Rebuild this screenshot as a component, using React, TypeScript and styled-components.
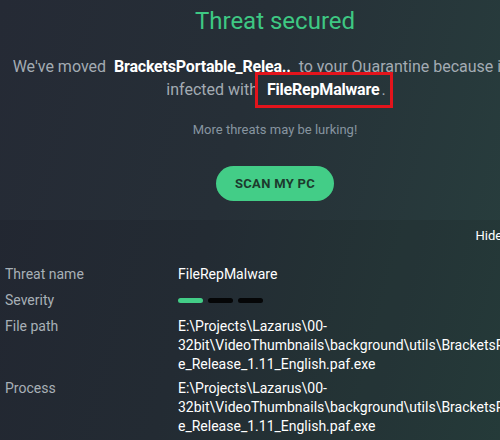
import styled, { createGlobalStyle } from "styled-components";

const GlobalStyle = createGlobalStyle`
  html, body {
    margin: 0;
    padding: 0;
    background: #242a33;
    overflow: hidden;
  }
  body {
    font-family: Roboto, "Liberation Sans", sans-serif;
  }
`;

const Frame = styled.div`
  width: 560px;
  height: 440px;
  display: flex;
  flex-direction: column;
  background: linear-gradient(105deg, #252a35 0%, #262f37 40%, #28423f 100%);
  overflow: hidden;
`;

const Hero = styled.section`
  height: 220px;
  display: flex;
  flex-direction: column;
  align-items: center;
  padding-top: 6px;
  box-sizing: border-box;
  width: 550px;
`;

const Title = styled.h1`
  margin: 0;
  font-size: 24px;
  line-height: 30px;
  font-weight: 400;
  color: #3ec883;
`;

const Message = styled.p`
  margin: 19px 0 0;
  padding-left: 2px;
  font-size: 16px;
  line-height: 23px;
  color: #a3abb3;
  text-align: center;
  white-space: nowrap;
`;

const Strong = styled.b`
  color: #ffffff;
  font-weight: 700;
  letter-spacing: -0.2px;
  margin: 0 4px;
`;

const Marked = styled(Strong)`
  position: relative;
  margin-left: 5px;
  margin-right: 2px;

  &::after {
    content: "";
    position: absolute;
    left: -12px;
    right: -14px;
    top: -8px;
    bottom: -9px;
    border: 3px solid #e3141c;
  }
`;

const Hint = styled.p`
  margin: 20px 0 0;
  font-size: 13px;
  line-height: 18px;
  color: #8795a0;
`;

const ScanButton = styled.button`
  margin-top: 27px;
  width: 118px;
  height: 35px;
  border: 0;
  border-radius: 18px;
  background: #43cd87;
  color: #1c3a2d;
  font-family: inherit;
  font-size: 13px;
  font-weight: 700;
  letter-spacing: 0.3px;
  cursor: pointer;
`;

const Details = styled.section`
  flex: 1;
  background: rgba(0, 0, 0, 0.07);
  padding: 7px 0 0 5px;
  display: flex;
  flex-direction: column;
`;

const HideRow = styled.div`
  display: flex;
  justify-content: flex-end;
  padding-right: 16px;
  font-size: 13px;
  line-height: 18px;
  color: #ffffff;
`;

const Table = styled.div`
  margin-top: 20px;
  display: grid;
  grid-template-columns: 173px 364px;
  row-gap: 7px;
  font-size: 14px;
  line-height: 19px;
`;

const Label = styled.div<{ $tight?: boolean }>`
  color: #a8b0b7;
  margin-top: ${(p) => (p.$tight ? "-2px" : "0")};
`;

const Value = styled.div<{ $tight?: boolean }>`
  color: #ffffff;
  overflow-wrap: anywhere;
  margin-top: ${(p) => (p.$tight ? "-2px" : "0")};
`;

const Bars = styled.div`
  display: flex;
  gap: 5px;
  align-items: center;
  height: 19px;
`;

const Bar = styled.span<{ $on?: boolean }>`
  width: 25px;
  height: 5px;
  border-radius: 3px;
  background: ${(p) => (p.$on ? "#43cd87" : "#050607")};
`;

const path =
  "E:\\Projects\\Lazarus\\00-32bit\\VideoThumbnails\\background\\utils\\BracketsPortable_Release_1.11_English.paf.exe";

export default function App() {
  return (
    <>
      <GlobalStyle />
      <Frame>
        <Hero>
          <Title>Threat secured</Title>
          <Message>
            We've moved <Strong>BracketsPortable_Relea..</Strong> to your Quarantine because it was
            <br />
            infected with <Marked>FileRepMalware</Marked>.
          </Message>
          <Hint>More threats may be lurking!</Hint>
          <ScanButton>SCAN MY PC</ScanButton>
        </Hero>
        <Details>
          <HideRow>Hide details</HideRow>
          <Table>
            <Label>Threat name</Label>
            <Value>FileRepMalware</Value>
            <Label>Severity</Label>
            <Bars>
              <Bar $on />
              <Bar />
              <Bar />
            </Bars>
            <Label>File path</Label>
            <Value>{path}</Value>
            <Label $tight>Process</Label>
            <Value $tight>{path}</Value>
          </Table>
        </Details>
      </Frame>
    </>
  );
}
